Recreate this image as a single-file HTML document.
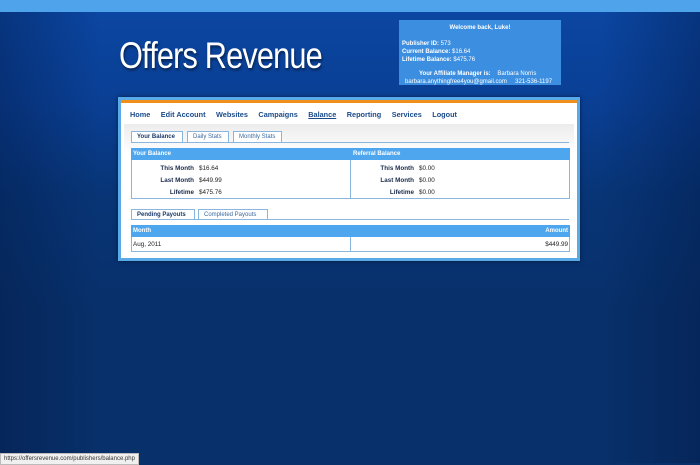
<!DOCTYPE html>
<html><head><style>
body{margin:0;width:700px;height:463px;overflow:hidden;font-family:"Liberation Sans",Arial,sans-serif;background:#08306a;position:relative}
.top{position:absolute;left:0;top:0;width:700px;height:12px;background:#4ea3ea}
.hdr{position:absolute;left:0;top:12px;width:700px;height:451px;background:linear-gradient(to bottom,#0b46a2 0,#0a3f94 90px,#083577 180px,#08306a 300px)}
.hdr:before{content:"";position:absolute;left:0;top:0;width:700px;height:100%;background:linear-gradient(to right,rgba(0,20,60,.35),rgba(0,0,0,0) 100px,rgba(0,0,0,0) 600px,rgba(0,20,60,.35))}
.logo{position:absolute;left:119px;top:35px;font-size:37px;color:#fff;letter-spacing:-1px;text-shadow:1px 2px 3px rgba(0,0,0,.5);transform:scaleX(.83);transform-origin:0 0;white-space:nowrap}
.wb{position:absolute;left:399px;top:20px;width:162px;height:65px;background:#3c8ee0;color:#fff;font-size:6px;line-height:8px}
.wb b{font-weight:bold}
.panel{position:absolute;left:118px;top:97px;width:462px;height:164px;background:#5aaae8;box-shadow:0 0 4px rgba(0,0,0,.5)}
.inner{position:absolute;left:3px;top:3px;width:456px;height:158px;background:#fff;border-top:3px solid #f0901a;box-sizing:border-box}
.nav{position:absolute;left:9px;top:7px;font-size:7.3px;font-weight:bold;color:#1a4a8a;white-space:nowrap}
.nav span{margin-right:10.5px}
.gray{position:absolute;left:3px;top:21px;width:450px;height:130px;background:linear-gradient(#ececec,#fff 30px)}
.tab{position:absolute;height:11px;border:1px solid #8ab6de;border-bottom:none;font-size:6px;line-height:11px;color:#3a6aa0;padding:0 5px;background:#fff;box-sizing:border-box}
.tab.a{color:#1a3a6a;font-weight:bold}
.line{position:absolute;height:1px;background:#8ab6de}
.th{position:absolute;height:12px;background:#4ea6ee;color:#fff;font-size:6px;font-weight:bold;line-height:12px}
.box{position:absolute;border:1px solid #8ab6de;box-sizing:border-box;background:#fff}
.t{position:absolute;font-size:6.3px;color:#222;white-space:nowrap}
.l{font-weight:bold;color:#1a2a4a;text-align:right;width:60px}
.status{position:absolute;left:0;top:453px;height:10px;padding:0 3px;background:#f0f0f0;border:1px solid #bbb;font-size:6px;line-height:10px;color:#333}
</style></head><body>
<div class="top"></div>
<div class="hdr"></div>
<div class="logo">Offers Revenue</div>
<div class="wb">
<div style="text-align:center;margin-top:4px;font-weight:bold">Welcome back, Luke!</div>
<div style="margin:8px 0 0 3px"><b>Publisher ID:</b> 573<br><b>Current Balance:</b> $16.64<br><b>Lifetime Balance:</b> $475.76</div>
<div style="margin-top:6px;padding-left:20px"><b>Your Affiliate Manager is:</b> &nbsp;&nbsp;&nbsp;Barbara Norris</div>
<div style="padding-left:6px">barbara.anythingfree4you@gmail.com &nbsp;&nbsp;&nbsp;&nbsp;321-536-1197</div>
</div>
<div class="panel"><div class="inner">
<div class="nav"><span>Home</span><span>Edit Account</span><span>Websites</span><span>Campaigns</span><span style="text-decoration:underline">Balance</span><span>Reporting</span><span>Services</span><span>Logout</span></div>
<div class="gray"></div>
</div></div>
<div class="tab a" style="left:131px;top:131px;width:52px">Your Balance</div>
<div class="tab" style="left:187px;top:131px;width:42px">Daily Stats</div>
<div class="tab" style="left:233px;top:131px;width:49px">Monthly Stats</div>
<div class="line" style="left:131px;top:142px;width:438px"></div>
<div class="box" style="left:131px;top:148px;width:439px;height:51px"></div>
<div class="th" style="left:131px;top:148px;width:439px"><span style="margin-left:2px">Your Balance</span><span style="position:absolute;left:222px">Referral Balance</span></div>
<div style="position:absolute;left:350px;top:160px;width:1px;height:39px;background:#8ab6de"></div>
<div class="t l" style="left:134px;top:165px">This Month</div><div class="t" style="left:199px;top:165px">$16.64</div>
<div class="t l" style="left:134px;top:177px">Last Month</div><div class="t" style="left:199px;top:177px">$449.99</div>
<div class="t l" style="left:134px;top:189px">Lifetime</div><div class="t" style="left:199px;top:189px">$475.76</div>
<div class="t l" style="left:354px;top:165px">This Month</div><div class="t" style="left:419px;top:165px">$0.00</div>
<div class="t l" style="left:354px;top:177px">Last Month</div><div class="t" style="left:419px;top:177px">$0.00</div>
<div class="t l" style="left:354px;top:189px">Lifetime</div><div class="t" style="left:419px;top:189px">$0.00</div>
<div class="tab a" style="left:131px;top:209px;width:64px">Pending Payouts</div>
<div class="tab" style="left:198px;top:209px;width:70px">Completed Payouts</div>
<div class="line" style="left:131px;top:219px;width:438px"></div>
<div class="box" style="left:131px;top:225px;width:439px;height:27px"></div>
<div class="th" style="left:131px;top:225px;width:439px"><span style="margin-left:2px">Month</span><span style="position:absolute;right:2px">Amount</span></div>
<div style="position:absolute;left:350px;top:237px;width:1px;height:15px;background:#8ab6de"></div>
<div class="t" style="left:133px;top:241px">Aug, 2011</div>
<div class="t" style="right:132px;top:241px">$449.99</div>
<div class="status">https://offersrevenue.com/publishers/balance.php</div>
</body></html>
